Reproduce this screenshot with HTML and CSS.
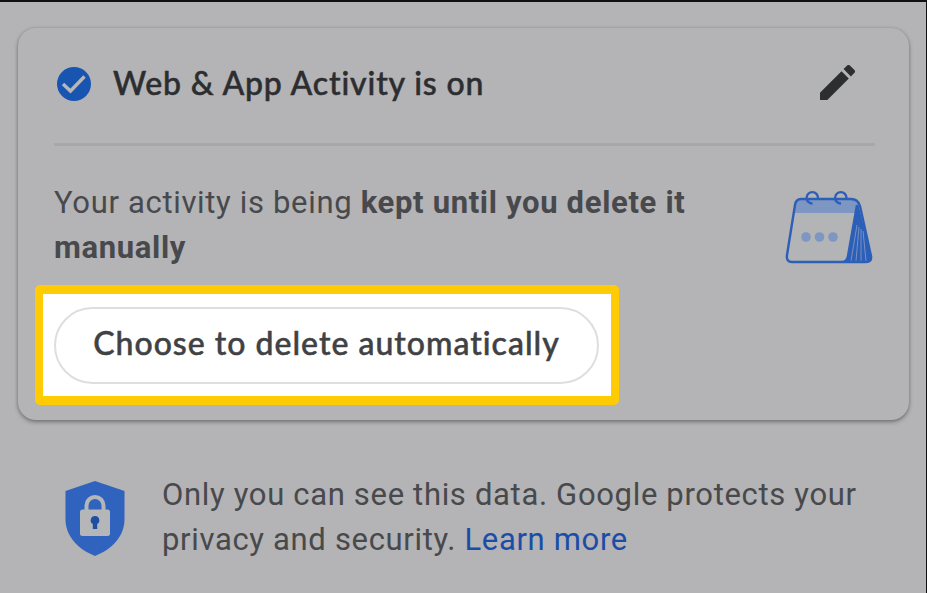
FILE: index.html
```
<!DOCTYPE html>
<html lang="en">
<head>
    <meta charset="UTF-8">
    <title>Activity controls</title>
    <link rel="stylesheet" href="styles.css">
</head>
<body>
<div class="card">
    <div class="card-header">
        <svg class="check" viewBox="0 0 34 34">
            <circle cx="17" cy="17" r="17" fill="#1755b0"/>
            <path d="M6 17l7.500 7L27.500 9.500" fill="none" stroke="#b6b7b9" stroke-width="3.4"/>
        </svg>
        <h2>Web &amp; App Activity is on</h2>
        <svg class="pencil" viewBox="3 3 18 18">
            <path d="M3 17.250V21h3.750L17.810 9.940l-3.750-3.750L3 17.250zM20.710 7.040a1 1 0 0 0 0-1.410l-2.340-2.340a1 1 0 0 0-1.410 0l-1.830 1.830 3.750 3.750 1.830-1.830z" fill="#2c2e30"/>
        </svg>
    </div>

    <div class="retention">
        <p>Your activity is being <b>kept until you delete it manually</b></p>
        <svg class="calendar" viewBox="0 0 90 74">
            <path d="M73 8L87 65q1 6-5 6H60L72 14z" fill="#2c5fb8"/>
            <path d="M73 34L67 70M75 36l-3 34M77 38v32M79 40l3 30" stroke="#8097c2" stroke-width="0.9" fill="none"/>
            <path d="M17 8h51q7 0 5 8L64 65q-1 6-6 6H8q-6 0-5-7L11 14q1-6 6-6z" fill="#b3b4b5"/>
            <path d="M17 8h51q7 0 5 8l-1 6H10l1-8q1-6 6-6z" fill="#7e96c2"/>
            <path d="M73 14L64 65q-1 6-6 6H8q-6 0-5-7L11 14q1-6 6-6h50q7 0 9 7l11 50q1 6-5 6H58" fill="none" stroke="#2c5fb8" stroke-width="2.4"/>
            <path d="M34 7A5.700 5.700 0 1 0 28.500 12.500M62.500 7A5.700 5.700 0 1 0 57 12.500" fill="none" stroke="#2c5fb8" stroke-width="2.4"/>
            <g fill="#7e96c2">
                <circle cx="22" cy="46" r="4.800"/>
                <circle cx="35.500" cy="46" r="4.800"/>
                <circle cx="49" cy="46" r="4.800"/>
            </g>
        </svg>
    </div>

    <div class="highlight">
        <button class="btn">Choose to delete automatically</button>
    </div>
</div>

<div class="privacy">
    <svg class="shield" viewBox="0 0 60 75">
        <path d="M30 0L59.500 10v28c0 17-12 30-29.500 37C12.500 68 .500 55 .500 38V10z" fill="#2f63bd"/>
        <path d="M21.500 30v-5.500a8.500 8.500 0 0 1 17 0V30" fill="none" stroke="#b5b6b8" stroke-width="4"/>
        <rect x="15" y="28.500" width="30" height="26.500" rx="2.500" fill="#b5b6b8"/>
        <path d="M30 35a4.300 4.300 0 0 1 2.200 8v5h-4.400v-5A4.300 4.300 0 0 1 30 35z" fill="#1f4fa3"/>
    </svg>
    <p>Only you can see this data. Google protects your privacy and security. <a href="#">Learn more</a></p>
</div>
</body>
</html>
```
FILE: styles.css
```
* {
    box-sizing: border-box;
}

body {
    margin: 0;
    height: 593px;
    overflow: hidden;
    border-top: 2px solid #101010;
    border-right: 1px solid #101010;
    background: #b4b3b5;
    color: #48494c;
    font-family: Roboto, sans-serif;
    font-size: 31px;
    line-height: 45px;
    letter-spacing: 0.67px;
}

h2, p {
    margin: 0;
}

.card {
    width: 891px;
    height: 392px;
    margin: 26px 0 0 18px;
    padding: 0 34px 0 36px;
    border-radius: 18px;
    box-shadow: 0 2px 4px rgba(0, 0, 0, 0.35), 0 0 3px rgba(0, 0, 0, 0.12);
}

.card-header {
    display: flex;
    align-items: center;
    height: 118px;
    padding: 0 20px 5px 3px;
    border-bottom: 3px solid #a8a7a9;
}

.check {
    width: 34px;
    height: 34px;
    margin-top: 2px;
}

h2 {
    margin: -2px 0 0 22px;
    color: #2c2d30;
    font-family: Lato, sans-serif;
    font-size: 32px;
    font-weight: 500;
    letter-spacing: 0.85px;
    -webkit-text-stroke: 0.5px #2c2d30;
}

.pencil {
    width: 35px;
    height: 35px;
    margin: -2px 0 0 auto;
}

.retention {
    display: flex;
    justify-content: space-between;
    height: 139px;
    padding-top: 34px;
}

.retention p {
    width: 660px;
}

.calendar {
    width: 90px;
    height: 74px;
    margin: 11px 1px 0 0;
    overflow: visible;
}

.highlight {
    width: 584px;
    height: 120px;
    margin-left: -19px;
    padding: 13px 11px;
    border: 8px solid #ffcb05;
    border-width: 9px 8px;
    border-radius: 5px;
    background: #fff;
}

.btn {
    display: block;
    width: 545px;
    height: 77px;
    padding: 0 0 7px;
    border: 2px solid #e0dde1;
    border-radius: 39px;
    background: #fff;
    color: #404144;
    font-family: Lato, sans-serif;
    font-size: 32px;
    font-weight: 500;
    letter-spacing: 1px;
    white-space: nowrap;
    -webkit-text-stroke: 0.5px #404144;
}

.privacy {
    display: flex;
    padding: 52px 60px 0 65px;
}

.shield {
    flex: none;
    width: 60px;
    height: 75px;
    margin: 9px 37px 0 0;
}

.privacy a {
    color: #1b4da8;
    text-decoration: none;
}
```
